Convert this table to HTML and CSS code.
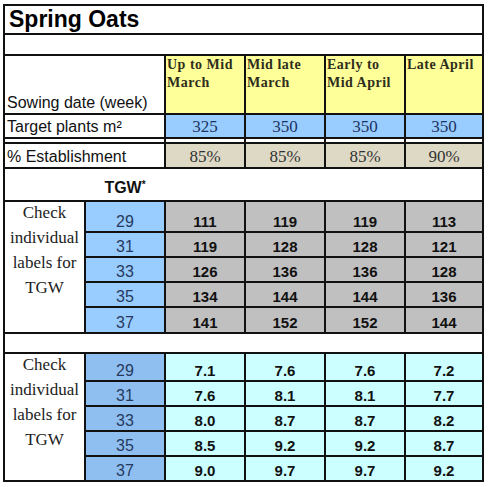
FILE: index.html
```html
<!DOCTYPE html>
<html lang="en">
<head>
<meta charset="utf-8">
<title>Spring Oats</title>
<link rel="stylesheet" href="styles.css">
</head>
<body>
<div class="sheet">
  <div class="cell title span-all">Spring Oats</div>
  <div class="cell span-all"></div>

  <div class="cell label span-2">Sowing date (week)</div>
  <div class="cell head">Up to Mid March</div>
  <div class="cell head">Mid late March</div>
  <div class="cell head">Early to Mid April</div>
  <div class="cell head">Late April</div>

  <div class="cell label span-2">Target plants m²</div>
  <div class="cell target">325</div>
  <div class="cell target">350</div>
  <div class="cell target">350</div>
  <div class="cell target">350</div>

  <div class="cell span-2"></div>
  <div class="cell"></div>
  <div class="cell"></div>
  <div class="cell"></div>
  <div class="cell"></div>

  <div class="cell label span-2">% Establishment</div>
  <div class="cell estab">85%</div>
  <div class="cell estab">85%</div>
  <div class="cell estab">85%</div>
  <div class="cell estab">90%</div>

  <div class="cell tgw-row span-all"><span class="tgw">TGW<span class="star">*</span></span></div>

  <div class="cell note"><span class="note-text">Check individual labels for TGW</span></div>
  <div class="cell tgw-val">29</div>
  <div class="cell grey">111</div><div class="cell grey">119</div><div class="cell grey">119</div><div class="cell grey">113</div>
  <div class="cell tgw-val">31</div>
  <div class="cell grey">119</div><div class="cell grey">128</div><div class="cell grey">128</div><div class="cell grey">121</div>
  <div class="cell tgw-val">33</div>
  <div class="cell grey">126</div><div class="cell grey">136</div><div class="cell grey">136</div><div class="cell grey">128</div>
  <div class="cell tgw-val">35</div>
  <div class="cell grey">134</div><div class="cell grey">144</div><div class="cell grey">144</div><div class="cell grey">136</div>
  <div class="cell tgw-val">37</div>
  <div class="cell grey">141</div><div class="cell grey">152</div><div class="cell grey">152</div><div class="cell grey">144</div>

  <div class="cell span-all"></div>

  <div class="cell note"><span class="note-text">Check individual labels for TGW</span></div>
  <div class="cell tgw-val dark">29</div>
  <div class="cell cyan">7.1</div><div class="cell cyan">7.6</div><div class="cell cyan">7.6</div><div class="cell cyan">7.2</div>
  <div class="cell tgw-val dark">31</div>
  <div class="cell cyan">7.6</div><div class="cell cyan">8.1</div><div class="cell cyan">8.1</div><div class="cell cyan">7.7</div>
  <div class="cell tgw-val dark">33</div>
  <div class="cell cyan">8.0</div><div class="cell cyan">8.7</div><div class="cell cyan">8.7</div><div class="cell cyan">8.2</div>
  <div class="cell tgw-val dark">35</div>
  <div class="cell cyan">8.5</div><div class="cell cyan">9.2</div><div class="cell cyan">9.2</div><div class="cell cyan">8.7</div>
  <div class="cell tgw-val dark">37</div>
  <div class="cell cyan">9.0</div><div class="cell cyan">9.7</div><div class="cell cyan">9.7</div><div class="cell cyan">9.2</div>
</div>
</body>
</html>
```

FILE: styles.css
```css
html, body {
  margin: 0;
  padding: 0;
  background: #ffffff;
}

body {
  font-family: "Liberation Sans", Arial, sans-serif;
  color: #111;
}

.sheet {
  margin: 4px 0 0 3px;
  width: max-content;
  display: grid;
  grid-template-columns: 79px 78px 78px 78px 78px 76px;
  grid-template-rows: 27px 19px 57px 22px 3px 23px 31px 29px 23px 23px 23px 24px 18px 26px 23px 23px 23px 23px;
  gap: 2px;
  background: #111;
  border: 2px solid #111;
}

.cell {
  background: #ffffff;
  display: flex;
  align-items: flex-end;
  justify-content: center;
  overflow: hidden;
}

.span-all { grid-column: 1 / -1; }
.span-2 { grid-column: span 2; }

.title {
  justify-content: flex-start;
  align-items: center;
  padding-left: 4px;
  font-size: 23px;
  font-weight: bold;
  line-height: 27px;
  color: #000;
}

.label {
  justify-content: flex-start;
  padding-left: 2px;
  font-size: 16px;
  line-height: 20px;
  color: #111;
}

.head {
  background: #ffff99;
  align-items: flex-start;
  justify-content: flex-start;
  padding-left: 1px;
  font-family: "Liberation Serif", "Times New Roman", serif;
  font-weight: bold;
  font-size: 14px;
  letter-spacing: 0.5px;
  line-height: 18px;
  color: #2e2e1c;
}

.target {
  background: #99ccff;
  font-family: "Liberation Serif", "Times New Roman", serif;
  font-size: 17px;
  line-height: 20px;
  color: #1d3461;
}

.estab {
  background: #ddd9c4;
  font-family: "Liberation Serif", "Times New Roman", serif;
  font-size: 17px;
  line-height: 20px;
  color: #333;
}

.tgw-row {
  justify-content: flex-start;
}

.tgw {
  width: 78px;
  margin-left: 81px;
  text-align: center;
  font-size: 16px;
  font-weight: bold;
  line-height: 20px;
  padding-bottom: 2px;
  color: #111;
}

.star {
  font-size: 10px;
  vertical-align: 5px;
}

.note {
  grid-column: 1;
  grid-row: span 5;
  align-items: flex-start;
  text-align: center;
  font-family: "Liberation Serif", "Times New Roman", serif;
  font-size: 17px;
  line-height: 25px;
  color: #222;
}

.note-text {
  display: block;
  margin-top: -2px;
}

.tgw-val {
  background: #99ccff;
  font-size: 16px;
  line-height: 18px;
  color: #263a5e;
}

.tgw-val.dark {
  background: #8fbff1;
}

.grey {
  background: #c0c0c0;
  font-size: 15px;
  font-weight: bold;
  line-height: 18px;
  color: #111;
}

.cyan {
  background: #ccffff;
  font-size: 15px;
  font-weight: bold;
  line-height: 18px;
  color: #111;
}
```
